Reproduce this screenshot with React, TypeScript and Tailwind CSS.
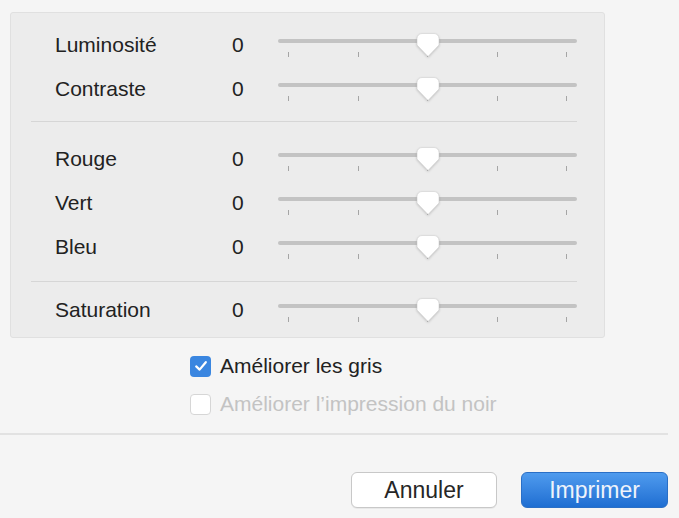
import React from 'react';

type Row = { label: string; value: number };

const groups: Row[][] = [
  [
    { label: 'Luminosité', value: 0 },
    { label: 'Contraste', value: 0 },
  ],
  [
    { label: 'Rouge', value: 0 },
    { label: 'Vert', value: 0 },
    { label: 'Bleu', value: 0 },
  ],
  [{ label: 'Saturation', value: 0 }],
];

function Thumb() {
  return (
    <svg
      width="24"
      height="26"
      viewBox="0 0 24 26"
      className="absolute left-[138px] top-[9px] drop-shadow-[0_1px_1px_rgba(0,0,0,0.18)]"
    >
      <path
        d="M6 1.5 H18 A5 5 0 0 1 23 6.5 V13 L12 24.5 L1 13 V6.5 A5 5 0 0 1 6 1.5 Z"
        fill="#ffffff"
        stroke="#cfcfcf"
        strokeWidth="0.6"
      />
    </svg>
  );
}

function Slider() {
  return (
    <div className="relative w-[299px] h-[44px]">
      <div className="absolute left-0 right-0 top-[16px] h-[4px] rounded-full bg-[#c3c3c3]" />
      <div className="absolute left-0 right-0 top-[29px] flex justify-between px-[10px]">
        {[0, 1, 2, 3, 4].map((i) => (
          <div key={i} className="w-px h-[5px] bg-[#a5a5a5]" />
        ))}
      </div>
      <Thumb />
    </div>
  );
}

function SliderRow({ label, value }: Row) {
  return (
    <div className="flex items-center h-[44px]">
      <span className="w-[177px]">{label}</span>
      <span className="w-[46px]">{value}</span>
      <Slider />
    </div>
  );
}

export default function App() {
  return (
    <div
      className="w-[679px] h-[518px] bg-[#f5f5f5] text-[#222222] overflow-hidden"
      style={{ fontFamily: '"Liberation Sans", Arial, sans-serif' }}
    >
      {/* adjustments panel */}
      <div className="ml-[10px] mt-[12px] w-[595px] h-[326px] border border-[#e0e0e0] rounded-[3px] bg-[#ececec] pl-[44px] pt-[10px] text-[21px]">
        {groups[0].map((r) => (
          <SliderRow key={r.label} {...r} />
        ))}
        <div className="-ml-[24px] mt-[10px] w-[546px] h-px bg-[#d6d6d6]" />
        <div className="mt-[15px]">
          {groups[1].map((r) => (
            <SliderRow key={r.label} {...r} />
          ))}
        </div>
        <div className="-ml-[24px] mt-[12px] w-[546px] h-px bg-[#d6d6d6]" />
        <div className="mt-[6px]">
          {groups[2].map((r) => (
            <SliderRow key={r.label} {...r} />
          ))}
        </div>
      </div>

      {/* options */}
      <div className="ml-[190px] mt-[13px] flex flex-col gap-[8px] text-[21px]">
        <label className="flex items-center h-[30px] gap-[9px]">
          <span className="w-[21px] h-[21px] rounded-[4px] bg-[#3a86e0] flex items-center justify-center">
            <svg width="16" height="16" viewBox="0 0 16 16">
              <path
                d="M3.2 8.4 L6.6 11.6 L12.8 4.2"
                fill="none"
                stroke="#ffffff"
                strokeWidth="2.2"
                strokeLinecap="round"
                strokeLinejoin="round"
              />
            </svg>
          </span>
          <span>Améliorer les gris</span>
        </label>
        <label className="flex items-center h-[30px] gap-[9px] text-[#c3c3c3]">
          <span className="w-[21px] h-[21px] rounded-[4px] bg-white border border-[#d6d6d6]" />
          <span>Améliorer l’impression du noir</span>
        </label>
      </div>

      <div className="mt-[14px] w-[668px] h-[2px] bg-[#e2e2e2]" />

      {/* buttons */}
      <div className="mt-[37px] mr-[11px] flex justify-end gap-[24px] text-[23px]">
        <button className="w-[146px] h-[36px] rounded-[6px] bg-white border border-[#c8c8c8] text-[#262626] shadow-[0_1px_0_rgba(0,0,0,0.05)]">
          Annuler
        </button>
        <button className="w-[147px] h-[36px] rounded-[6px] bg-gradient-to-b from-[#4f9bee] to-[#1e6ed2] border border-[#2a6fc6] text-[#eef3fb]">
          Imprimer
        </button>
      </div>
    </div>
  );
}
